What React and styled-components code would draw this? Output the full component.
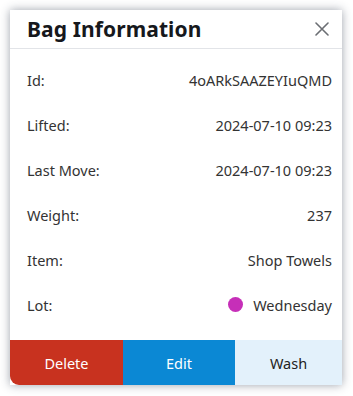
import React from 'react';
import styled, { createGlobalStyle } from 'styled-components';

const GlobalStyle = createGlobalStyle`
  html, body {
    margin: 0;
    padding: 0;
    background: #ffffff;
  }
  body {
    font-family: 'Noto Sans', 'Open Sans', Arial, sans-serif;
    color: #333333;
  }
`;

const Page = styled.div`
  padding: 10px 11px 11px 10px;
`;

const Card = styled.div`
  width: 332px;
  height: 375px;
  background: #ffffff;
  box-shadow: 0 0 9px rgba(40, 50, 70, 0.45);
  display: flex;
  flex-direction: column;
`;

const Header = styled.div`
  height: 39px;
  display: flex;
  align-items: center;
  justify-content: space-between;
  padding: 0 12px 0 17px;
  border-bottom: 1px solid #e2e4e8;
  box-sizing: border-box;
`;

const Title = styled.h1`
  margin: 0;
  font-size: 21px;
  font-weight: 700;
  color: #16181c;
  letter-spacing: 0.1px;
`;

const CloseButton = styled.button`
  border: none;
  background: none;
  padding: 0;
  width: 16px;
  height: 16px;
  display: flex;
  align-items: center;
  justify-content: center;
  cursor: pointer;
`;

const Body = styled.div`
  flex: 1;
  padding: 8px 10px 12px 17px;
  display: flex;
  flex-direction: column;
`;

const Row = styled.div`
  height: 45px;
  display: flex;
  align-items: center;
  justify-content: space-between;
  font-size: 14.5px;
  color: #333333;
`;

const Value = styled.span`
  display: flex;
  align-items: center;
  gap: 10px;
`;

const Dot = styled.span`
  width: 15px;
  height: 15px;
  border-radius: 50%;
  background: ${p => p.color};
`;

const Actions = styled.div`
  height: 45px;
  display: grid;
  grid-template-columns: 113px 112px 1fr;
`;

const ActionButton = styled.button`
  border: none;
  font-family: inherit;
  font-size: 14.5px;
  cursor: pointer;
  background: ${p => p.bg};
  color: ${p => p.fg};
  border-bottom-left-radius: ${p => (p.first ? '9px' : '0')};
`;

const rows = [
  { label: 'Id:', value: '4oARkSAAZEYIuQMD' },
  { label: 'Lifted:', value: '2024-07-10 09:23' },
  { label: 'Last Move:', value: '2024-07-10 09:23' },
  { label: 'Weight:', value: '237' },
  { label: 'Item:', value: 'Shop Towels' },
  { label: 'Lot:', value: 'Wednesday', dot: '#c62fb8' },
];

export default function App() {
  return (
    <>
      <GlobalStyle />
      <Page>
        <Card>
          <Header>
            <Title>Bag Information</Title>
            <CloseButton aria-label="Close">
              <svg width="14" height="14" viewBox="0 0 14 14">
                <path d="M1 1 L13 13 M13 1 L1 13" stroke="#6b6e73" strokeWidth="1.6" strokeLinecap="round" />
              </svg>
            </CloseButton>
          </Header>
          <Body>
            {rows.map(r => (
              <Row key={r.label}>
                <span>{r.label}</span>
                <Value>
                  {r.dot && <Dot color={r.dot} />}
                  {r.value}
                </Value>
              </Row>
            ))}
          </Body>
          <Actions>
            <ActionButton first bg="#c8321f" fg="#ffffff">Delete</ActionButton>
            <ActionButton bg="#0b88d4" fg="#ffffff">Edit</ActionButton>
            <ActionButton bg="#e3f1fb" fg="#222222">Wash</ActionButton>
          </Actions>
        </Card>
      </Page>
    </>
  );
}
